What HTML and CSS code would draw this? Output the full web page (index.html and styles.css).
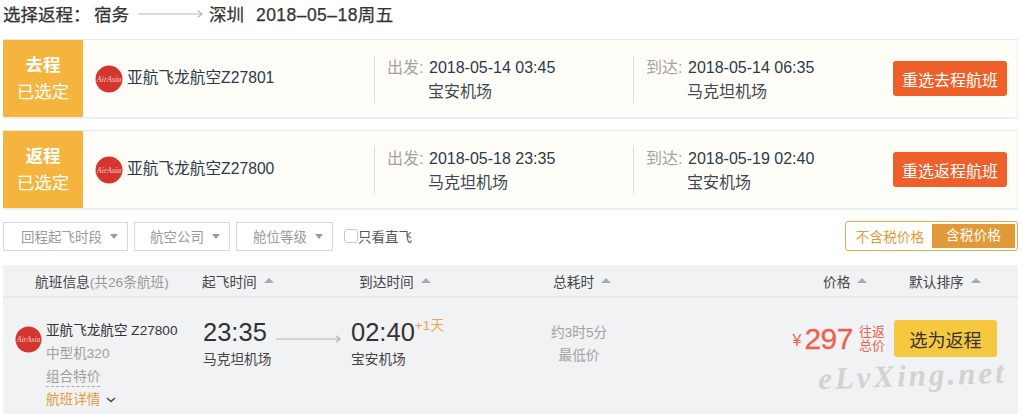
FILE: index.html
```html
<!DOCTYPE html>
<html lang="zh">
<head>
<meta charset="utf-8">
<title>选择返程</title>
<link rel="stylesheet" href="styles.css">
</head>
<body>
<h1 class="title">
  <span class="title-label">选择返程：</span><span>宿务</span>
  <svg class="title-arrow" width="65" height="8" viewBox="0 0 65 8"><path d="M0 4H63.500M60 .7L64 4L60 7.300" fill="none" stroke="#b9b9b9" stroke-width="1.200"/></svg>
  <span>深圳</span><span class="title-date">2018–05–18周五</span>
</h1>

<section class="card">
  <div class="badge"><strong>去程</strong><span>已选定</span></div>
  <div class="airline">
    <svg class="logo" viewBox="0 0 28 28"><circle cx="14" cy="14" r="13.500" fill="#d4362f"/><text x="14" y="17" text-anchor="middle" class="logo-text">AirAsia</text></svg>
    <span class="airline-name">亚航飞龙航空Z27801</span>
  </div>
  <div class="stop stop-dep">
    <div class="stop-line"><span class="stop-key">出发:</span><span>2018-05-14 03:45</span></div>
    <div class="stop-place">宝安机场</div>
  </div>
  <div class="stop stop-arr">
    <div class="stop-line"><span class="stop-key">到达:</span><span>2018-05-14 06:35</span></div>
    <div class="stop-place">马克坦机场</div>
  </div>
  <button class="reselect">重选去程航班</button>
</section>

<section class="card">
  <div class="badge"><strong>返程</strong><span>已选定</span></div>
  <div class="airline">
    <svg class="logo" viewBox="0 0 28 28"><circle cx="14" cy="14" r="13.500" fill="#d4362f"/><text x="14" y="17" text-anchor="middle" class="logo-text">AirAsia</text></svg>
    <span class="airline-name">亚航飞龙航空Z27800</span>
  </div>
  <div class="stop stop-dep">
    <div class="stop-line"><span class="stop-key">出发:</span><span>2018-05-18 23:35</span></div>
    <div class="stop-place">马克坦机场</div>
  </div>
  <div class="stop stop-arr">
    <div class="stop-line"><span class="stop-key">到达:</span><span>2018-05-19 02:40</span></div>
    <div class="stop-place">宝安机场</div>
  </div>
  <button class="reselect">重选返程航班</button>
</section>

<div class="filters">
  <div class="select select-a">回程起飞时段<i class="caret"></i></div>
  <div class="select select-b">航空公司<i class="caret"></i></div>
  <div class="select select-c">舱位等级<i class="caret"></i></div>
  <label class="direct"><i class="check"></i>只看直飞</label>
  <div class="toggle"><span class="toggle-off">不含税价格</span><span class="toggle-on">含税价格</span></div>
</div>

<div class="results">
  <div class="thead">
    <div class="th th-info">航班信息<span class="muted">(共26条航班)</span></div>
    <div class="th">起飞时间<i class="sort"></i></div>
    <div class="th">到达时间<i class="sort"></i></div>
    <div class="th">总耗时<i class="sort"></i></div>
    <div class="th">价格<i class="sort"></i></div>
    <div class="th">默认排序<i class="sort"></i></div>
  </div>
  <div class="flight">
    <svg class="logo flight-logo" viewBox="0 0 28 28"><circle cx="14" cy="14" r="13.500" fill="#d4362f"/><text x="14" y="17" text-anchor="middle" class="logo-text">AirAsia</text></svg>
    <div class="flight-info">
      <div class="flight-name">亚航飞龙航空 Z27800</div>
      <div class="flight-plane">中型机320</div>
      <div class="flight-deal"><span>组合特价</span></div>
      <div class="flight-more">航班详情<svg width="10" height="6" viewBox="0 0 10 6"><path d="M1 1L5 4.500L9 1" fill="none" stroke="#444" stroke-width="1.500"/></svg></div>
    </div>
    <div class="time time-dep"><div class="clock">23:35</div><div class="airport">马克坦机场</div></div>
    <svg class="flight-arrow" width="65" height="8" viewBox="0 0 65 8"><path d="M0 4H63.500M60 .7L64 4L60 7.300" fill="none" stroke="#b4b4b4" stroke-width="1.200"/></svg>
    <div class="time time-arr"><div class="clock">02:40<sup class="plus">+1天</sup></div><div class="airport">宝安机场</div></div>
    <div class="duration"><div>约3时5分</div><div>最低价</div></div>
    <div class="price"><span class="yen">¥</span><span class="amount">297</span><span class="price-note">往返<br>总价</span></div>
    <button class="choose">选为返程</button>
  </div>
  <div class="watermark">eLvXing.net</div>
</div>
</body>
</html>
```

FILE: styles.css
```css
* { box-sizing: border-box; }
html, body { margin: 0; height: 414px; overflow: hidden; background: #fff; }
body {
  padding: 0 4px 0 3px;
  font-family: "Liberation Sans", "Noto Sans CJK SC", sans-serif;
  color: #2b3a4a;
  font-size: 14px;
}
.logo-text {
  font-family: "Liberation Serif", serif;
  font-style: italic;
  font-size: 8px;
  fill: #f4cfcc;
}
.title {
  display: flex;
  align-items: center;
  height: 39px;
  margin: 0;
  padding-bottom: 12px;
  font-size: 17.500px;
  font-weight: 400;
  color: #333;
  -webkit-text-stroke: .25px #333;
}
.title-label { width: 91px; white-space: nowrap; }
.title-arrow { margin: 0 6px 0 9px; }
.title-date { margin-left: 12px; letter-spacing: .45px; }

.card {
  display: flex;
  align-items: center;
  height: 80px;
  margin-bottom: 11px;
  background: #fffdf8;
  border-top: 1px solid #e6e9f0;
  border-bottom: 2px solid #eff0f2;
  border-right: 1px solid #f1f1ee;
}
.badge {
  flex: none;
  align-self: stretch;
  width: 80px;
  display: flex;
  flex-direction: column;
  align-items: center;
  justify-content: center;
  gap: 6px;
  background: #f5b43e;
  color: #fff;
  font-size: 17.500px;
  line-height: 21px;
}
.badge strong { font-weight: 700; }
.airline {
  flex: none;
  width: 291px;
  display: flex;
  align-items: center;
  gap: 4px;
  padding-left: 12px;
  font-size: 15.700px;
  white-space: nowrap;
}
.airline-name { padding-bottom: 4px; }
.logo { display: block; flex: none; width: 28px; height: 28px; }
.stop {
  flex: none;
  height: 48px;
  padding-left: 12px;
  padding-top: 1px;
  border-left: 1px solid #dedddb;
  line-height: 24px;
  font-size: 16px;
  white-space: nowrap;
}
.stop-dep { width: 259px; }
.stop-arr { width: 260px; }
.stop-line { display: flex; height: 24px; }
.stop-key { width: 42px; color: #a3a3a3; }
.stop-place { padding-left: 41px; color: #3d4852; }
.reselect {
  flex: none;
  width: 114px;
  height: 35px;
  padding: 0;
  border: 0;
  border-radius: 3px;
  background: #ee5f2a;
  color: #fff;
  font: inherit;
  font-size: 16px;
}

.filters { display: flex; align-items: center; height: 30px; margin-bottom: 14px; }
.select {
  flex: none;
  display: flex;
  align-items: center;
  justify-content: flex-end;
  height: 29px;
  margin-right: 6px;
  padding-right: 9px;
  border: 1px solid #d8d8d8;
  color: #9a9a9a;
  font-size: 13.500px;
  white-space: nowrap;
}
.select-a { width: 125px; }
.select-b { width: 96px; }
.select-c { width: 97px; margin-right: 11px; }
.caret {
  width: 0;
  height: 0;
  margin-left: 8px;
  border-left: 4.500px solid transparent;
  border-right: 4.500px solid transparent;
  border-top: 5px solid #9b9b9b;
}
.direct { display: flex; align-items: center; color: #555; font-size: 13.500px; white-space: nowrap; }
.check {
  width: 14px;
  height: 14px;
  background: #fff;
  border: 1px solid #c9c9c9;
  border-radius: 3px;
}
.toggle {
  display: flex;
  align-items: center;
  height: 30px;
  margin-left: auto;
  width: 173px;
  padding: 2px;
  border: 1px solid #eaa64d;
  border-radius: 3px;
  font-size: 13.700px;
  white-space: nowrap;
}
.toggle-off { flex: 1; text-align: center; color: #e29a37; }
.toggle-on {
  width: 83px;
  height: 24px;
  line-height: 24px;
  text-align: center;
  background: #e19a37;
  color: #fff;
}

.results { position: relative; height: 149px; background: #f1f2f4; }
.thead {
  display: grid;
  grid-template-columns: 199px 157px 194px 270px 86px 1fr;
  align-items: center;
  height: 33px;
  border-bottom: 2px solid #e8e9eb;
  color: #444;
  font-size: 13.700px;
  white-space: nowrap;
}
.th { display: flex; align-items: center; }
.th-info { padding-left: 32px; }
.muted { color: #999; }
.sort {
  width: 0;
  height: 0;
  margin-left: 7px;
  border-left: 5px solid transparent;
  border-right: 5px solid transparent;
  border-bottom: 5px solid #aaa;
}
.flight { display: flex; align-items: flex-start; height: 116px; padding-left: 12px; padding-right: 21px; white-space: nowrap; }
.flight-logo { width: 27px; height: 27px; margin-top: 28px; margin-right: 4px; }
.flight-info { flex: none; width: 157px; padding-top: 21px; font-size: 13.600px; line-height: 23px; }
.flight-name { color: #333; }
.flight-plane { color: #a0a0a0; }
.flight-deal { color: #a0a0a0; }
.flight-deal span { display: inline-block; height: 20px; line-height: 19px; border-bottom: 1px dashed #aaa; }
.flight-more { display: flex; align-items: center; gap: 6px; color: #e59a3c; }
.time { flex: none; padding-top: 19px; }
.time-dep { width: 73px; }
.time-arr { width: 200px; margin-left: 10px; }
.clock { font-size: 25.500px; line-height: 31px; color: #333; }
.airport { font-size: 13.700px; line-height: 23px; color: #444; }
.plus { font-size: 13.700px; line-height: 0; vertical-align: 11px; color: #eaa64d; }
.flight-arrow { flex: none; margin-top: 37px; }
.duration { flex: none; width: 56px; padding-top: 23px; font-size: 13.700px; line-height: 23px; color: #a0a0a0; text-align: center; }
.price { display: flex; align-items: center; height: 37px; margin-top: 22px; margin-left: auto; color: #ef5f4b; }
.yen { font-size: 16px; margin-right: 3px; margin-top: 5px; }
.amount { font-size: 30px; line-height: 37px; letter-spacing: -.5px; -webkit-text-stroke: .3px #ef5f4b; }
.price-note { margin-left: 6px; font-size: 13px; line-height: 14px; }
.choose {
  flex: none;
  width: 103px;
  height: 37px;
  margin-top: 22px;
  margin-left: 9px;
  padding: 0;
  border: 0;
  border-radius: 3px;
  background: #f6c840;
  color: #333;
  font: inherit;
  font-size: 18px;
}
.watermark {
  position: absolute;
  left: 815px;
  top: 93px;
  font-family: "Liberation Serif", serif;
  font-style: italic;
  font-weight: 700;
  font-size: 31px;
  letter-spacing: 3px;
  color: #d2d2d2;
  white-space: nowrap;
  transform: rotate(-2deg);
}
```
